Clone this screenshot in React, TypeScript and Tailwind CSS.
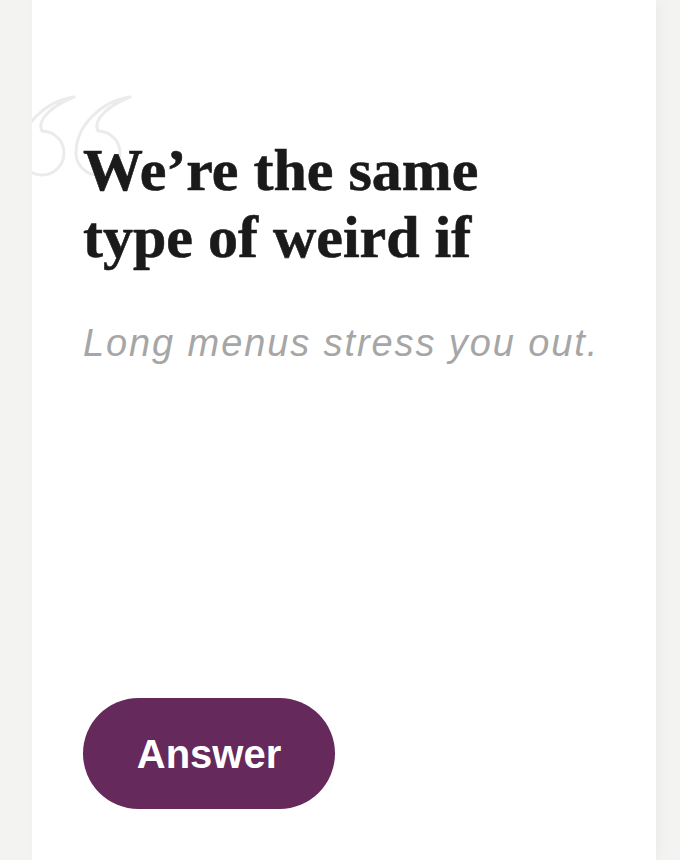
import React from 'react';

function QuoteMark() {
    // outlined opening quote, clipped by the card edge
    const glyph = 'M60 2C32 6 6 30 6 58A22 22 0 1 0 28 36C22 24 40 10 60 2Z';
    return (
        <svg className="absolute left-0 top-[92px]" width="110" height="92" viewBox="0 0 110 92" fill="none">
            <g transform="translate(-18 3)" stroke="#ebebeb" strokeWidth="3" strokeLinejoin="round">
                <path d={glyph} />
            </g>
            <g transform="translate(38 3)" stroke="#ebebeb" strokeWidth="3" strokeLinejoin="round">
                <path d={glyph} />
            </g>
        </svg>
    );
}

export default function App() {
    return (
        <div className="flex h-[860px] w-full bg-[#f3f3f1] pl-[32px] pr-[24px]">
            {/* Card */}
            <div className="relative flex flex-1 flex-col overflow-hidden bg-white pl-[51px] pt-[137px] pb-[51px] shadow-[4px_0_12px_rgba(0,0,0,0.03)]">
                <QuoteMark />

                <h1
                    className="relative text-[60px] font-bold leading-[67px] text-[#1a1a1a] [-webkit-text-stroke:0.6px_#1a1a1a]"
                    style={{ fontFamily: '"Liberation Serif", serif' }}
                >
                    We’re the same
                    <br />
                    type of weird if
                </h1>

                <p
                    className="mt-[50px] text-[38px] italic leading-[45.6px] tracking-[1.9px] text-[#a6a6a6]"
                    style={{ fontFamily: '"Liberation Sans", sans-serif' }}
                >
                    Long menus stress you out.
                </p>

                <div className="mt-auto">
                    <button
                        className="flex h-[111px] w-[252px] items-center justify-center rounded-full bg-[#65295b] text-[40px] font-bold text-white"
                        style={{ fontFamily: '"Liberation Sans", sans-serif' }}
                    >
                        Answer
                    </button>
                </div>
            </div>
        </div>
    );
}
